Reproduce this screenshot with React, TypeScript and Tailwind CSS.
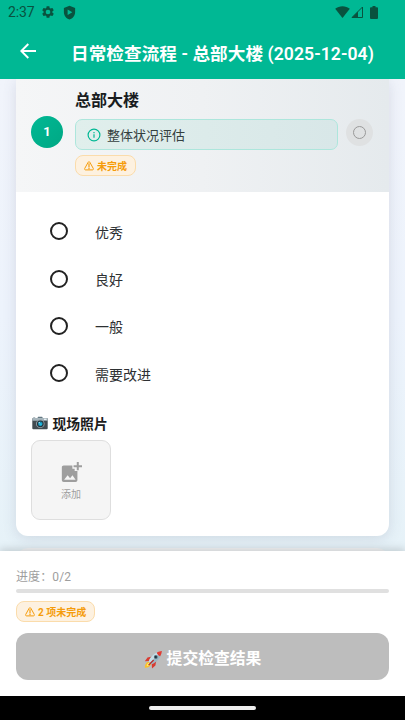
import * as React from "react";

const options = ["优秀", "良好", "一般", "需要改进"];

function StatusBar() {
  return (
    <div className="flex h-6 items-center justify-between pl-2 pr-[27px] text-[#09523f]">
      <div className="flex items-center">
        <span className="w-[33px] text-[14px] leading-6 tracking-[-0.1px]">2:37</span>
        <svg className="h-[14px] w-[14px]" viewBox="0 0 24 24" fill="currentColor">
          <path d="M19.4 13c.04-.3.06-.6.06-1s-.02-.7-.06-1l2.1-1.6c.2-.15.24-.4.12-.64l-2-3.46c-.12-.2-.38-.3-.6-.22l-2.5 1c-.5-.4-1.07-.73-1.7-.98l-.37-2.65A.5.5 0 0 0 14 2h-4a.5.5 0 0 0-.5.42L9.13 5.1c-.6.25-1.17.6-1.7.98l-2.48-1a.5.5 0 0 0-.6.22l-2 3.46c-.13.22-.07.5.12.64L4.57 11a8 8 0 0 0 0 2l-2.1 1.65a.5.5 0 0 0-.12.64l2 3.46c.12.22.38.3.6.22l2.5-1c.5.4 1.07.72 1.7.97l.37 2.65c.03.24.24.42.48.42h4c.25 0 .46-.18.5-.42l.37-2.65a7 7 0 0 0 1.7-.98l2.48 1c.22.1.48 0 .6-.22l2-3.46a.5.5 0 0 0-.12-.64L19.4 13zM12 16a4 4 0 1 1 0-8 4 4 0 0 1 0 8z" />
        </svg>
        <svg className="ml-[7px] h-[15px] w-[15px]" viewBox="0 0 24 24" fill="currentColor" fillRule="evenodd">
          <path d="M12 1 3 4.600V11c0 5.700 3.800 10.400 9 12 5.200-1.600 9-6.300 9-12V4.600L12 1zM9 7l7.500 4.500L9 16V7z" />
        </svg>
      </div>
      <div className="flex items-center">
        <svg className="h-3 w-[15px]" viewBox="0 0 15 12" fill="currentColor">
          <path d="M7.500 12 0.200 2.800C2.200 1.200 4.800 0.300 7.500 0.300s5.300.9 7.300 2.500L7.500 12z" />
        </svg>
        <svg className="ml-[1px] h-3 w-3" viewBox="0 0 12 12">
          <path d="M11.500 1v10.500H1z" fill="none" stroke="currentColor" strokeWidth="1" />
          <path d="M1 11.500 7 5.500v6z" fill="currentColor" />
        </svg>
        <svg className="ml-[7px] h-[13px] w-2" viewBox="0 0 8 13" fill="currentColor">
          <path d="M2.500 0h3v1.300H7a1 1 0 0 1 1 1V12a1 1 0 0 1-1 1H1a1 1 0 0 1-1-1V2.300a1 1 0 0 1 1-1h1.500z" />
        </svg>
      </div>
    </div>
  );
}

function WarningIcon() {
  return (
    <svg className="h-[10px] w-[10px] shrink-0" viewBox="0 0 10 10" fill="none" stroke="currentColor">
      <path d="M4.200 1.200a.9.9 0 0 1 1.600 0l3.500 6.300a.9.9 0 0 1-.8 1.400h-7a.9.9 0 0 1-.8-1.400z" strokeWidth="1" />
      <path d="M5 2.300v4.100M5 7v1.200" strokeWidth="1.200" />
    </svg>
  );
}

function Badge({ children }: { children: React.ReactNode }) {
  return (
    <div className="inline-flex h-[21px] items-center gap-[3px] rounded-[8px] border border-[#fbdcab] bg-[#fdf1e0] px-2 text-[10px] font-bold leading-none text-[#f59c0b]">
      <WarningIcon />
      <span className="pt-[2px]">{children}</span>
    </div>
  );
}

function CameraIcon() {
  return (
    <svg className="h-[14px] w-4 shrink-0" viewBox="0 0 16 14">
      <path d="M1.200 1.500h2v1h-2zM5.300 2.300 6.100.7h4l.9 1.600z" fill="#637983" />
      <rect x=".3" y="2" width="15.400" height="11.300" rx="1" fill="#424b50" />
      <path d="M.3 3a1 1 0 0 1 1-1h13.400a1 1 0 0 1 1 1v1.700H.3z" fill="#a7b5bc" />
      <rect x="12" y="2.700" width="2.500" height="1.300" fill="#e4eef1" />
      <circle cx="8.300" cy="7.800" r="4.300" fill="#93a4ac" />
      <circle cx="8.300" cy="7.800" r="3.400" fill="#263238" />
      <circle cx="8.300" cy="7.800" r="2.400" fill="#168baf" />
      <circle cx="8.600" cy="8.200" r="1.200" fill="#26bce0" />
      <circle cx="7.300" cy="6.700" r=".6" fill="#d5f5ff" />
    </svg>
  );
}

function RocketIcon() {
  return (
    <svg className="h-[19px] w-[19px] shrink-0" viewBox="0 0 19 19">
      <path d="M4.500 11.500C2 12.500.7 15 .8 17.700c2.700.2 5.200-1 6.200-3.500z" fill="#fbc02d" />
      <path d="M4.800 12.800c-1.300.8-2 2-2 3.300 1.400 0 2.500-.7 3.300-2z" fill="#fff176" />
      <path d="M8 6.500 3.500 7.600.8 11.300l4.700-.2zM12.200 11l-.8 4.500-3.400 3-.3-5z" fill="#d93b31" />
      <path d="M4.700 11.400C6.500 6.500 10.700 2 17.800 1c-.8 7-5 11.300-10.200 13.300z" fill="#9bb8c5" />
      <path d="M4.700 11.400C6.500 6.500 10.700 2 17.800 1L6.200 12.800z" fill="#c5dce5" />
      <path d="M12.700 2.700C14.200 1.700 16 1.200 17.900 1c-.2 2-.8 3.700-1.700 5.300-1.500-.7-2.800-2-3.500-3.600z" fill="#e43b32" />
      <circle cx="11.800" cy="7" r="1.900" fill="#546e7a" />
      <circle cx="11.800" cy="7" r="1.100" fill="#18313b" />
      <path d="m9.200 9.500.9.900-5 5.200-1-.9z" fill="#b92c2c" />
    </svg>
  );
}

function InspectionHeader() {
  return (
    <div className="flex h-[113px] bg-linear-to-r from-[#f5f6f7] via-[#eff1f3] to-[#e5eaed] pl-[15px] pr-4">
      <div className="mt-[37px] flex h-8 w-8 shrink-0 items-center justify-center rounded-full bg-linear-to-br from-[#00b894] to-[#00a884] text-[13px] font-bold text-white">
        1
      </div>
      <div className="ml-3 w-[263px] pt-[11px]">
        <h2 className="text-[16px] font-bold leading-[21px] text-[#191c1e]">总部大楼</h2>
        <div className="mt-2 flex h-[31px] items-center rounded-[7px] border border-[#ade6dc] bg-linear-to-r from-[#e0efec] to-[#d8e7e8] pl-[11px] text-[13px] text-[#34403f]">
          <svg className="h-[14px] w-[14px]" viewBox="0 0 14 14" fill="none" stroke="#00b894" strokeWidth="1.200">
            <circle cx="7" cy="7" r="5.900" />
            <path d="M7 6.300v3.500M7 4v1.200" />
          </svg>
          <span className="ml-[6px] pt-[2px]">整体状况评估</span>
        </div>
        <div className="mt-[5px] flex">
          <Badge>未完成</Badge>
        </div>
      </div>
      <div className="ml-2 mt-10 flex h-[27px] w-[27px] shrink-0 items-center justify-center rounded-full bg-[#dfe1e2]">
        <div className="h-[13px] w-[13px] rounded-full border border-[#999]" />
      </div>
    </div>
  );
}

export default function App() {
  return (
    <div className="flex h-[720px] w-[405px] flex-col overflow-hidden bg-white font-['Roboto','Noto_Sans_CJK_SC',sans-serif]">
      <header className="h-[79px] shrink-0 bg-[#00b894]">
        <StatusBar />
        <div className="flex h-[55px] items-center pl-5 text-white">
          <svg className="mb-px h-4 w-4" viewBox="0 0 16 16" fill="none" stroke="currentColor" strokeWidth="1.900">
            <path d="M16 8H1.500M8.300 1 1.300 8l7 7" />
          </svg>
          <h1 className="ml-[35px] whitespace-nowrap pt-[4px] text-[17.600px] font-semibold leading-6 tracking-[0.070px]">
            日常检查流程 - 总部大楼 (2025-12-04)
          </h1>
        </div>
      </header>

      <main className="h-[472px] shrink-0 overflow-hidden bg-linear-to-b from-[#f1f4fb] via-[#edf3fc] to-[#e6f2f8] px-4">
        <section className="h-[457px] overflow-hidden rounded-b-[12px] bg-white shadow-[0_3px_14px_rgba(80,90,120,0.16)]">
          <InspectionHeader />
          <div className="px-[15px] pt-[15.500px]">
            {options.map((option) => (
              <div key={option} className="flex h-[47.400px] items-center pl-[18.500px]">
                <div className="h-[18px] w-[18px] rounded-full border-2 border-[#222]" />
                <span className="ml-[27.500px] pt-[3px] text-[14px] leading-5 text-[#2d3032]">{option}</span>
              </div>
            ))}
            <h3 className="mt-4 flex h-5 items-center gap-[5px] pl-[0.500px] text-[13.800px] font-bold leading-5 text-[#1c1c1c]">
              <CameraIcon />
              <span className="pt-px">现场照片</span>
            </h3>
            <button className="mt-[7px] flex h-20 w-20 flex-col items-center rounded-[9px] border border-[#dedede] bg-[#f5f5f5] pt-5 text-[#9e9e9e]">
              <svg className="h-[22px] w-[22px] overflow-visible" viewBox="0 0 24 24" fill="currentColor">
                <path d="M20.500 1v3.500H24v2.200h-3.500v3.500h-2.200V6.700h-3.500V4.500h3.500V1zM16 8.500V11h3v10a2 2 0 0 1-2 2H4a2 2 0 0 1-2-2V7c0-1.100.9-2 2-2h9.500v3.500zM4.500 20.500h12.500l-3.400-5-2.600 3.300-2.700-3.300z" />
              </svg>
              <span className="mt-[4px] text-[10px] leading-[15px]">添加</span>
            </button>
          </div>
        </section>
        <section className="mt-3 h-[200px] rounded-[12px] bg-[#f1f3f5]" />
      </main>

      <footer className="relative h-[145px] shrink-0 bg-white px-4 pt-[17px] shadow-[0_-2px_8px_rgba(0,0,0,0.16)]">
        <p className="pt-px text-[12px] leading-[17px] tracking-[0.1px] text-[#9e9e9e]">进度：0/2</p>
        <div className="mt-[3px] h-1 rounded-full bg-[#e0e0e0]" />
        <div className="mt-2 flex">
          <Badge>2 项未完成</Badge>
        </div>
        <button className="mt-[11px] flex h-[47px] w-full items-center justify-center gap-1 rounded-[12px] bg-[#bdbdbd] pt-[5px] text-[15.800px] font-bold leading-6 text-white">
          <RocketIcon />
          <span>提交检查结果</span>
        </button>
      </footer>
      <div className="relative flex h-6 shrink-0 items-center justify-center bg-black">
        <div className="h-1 w-[107px] rounded-full bg-[#eee]" />
      </div>
    </div>
  );
}
